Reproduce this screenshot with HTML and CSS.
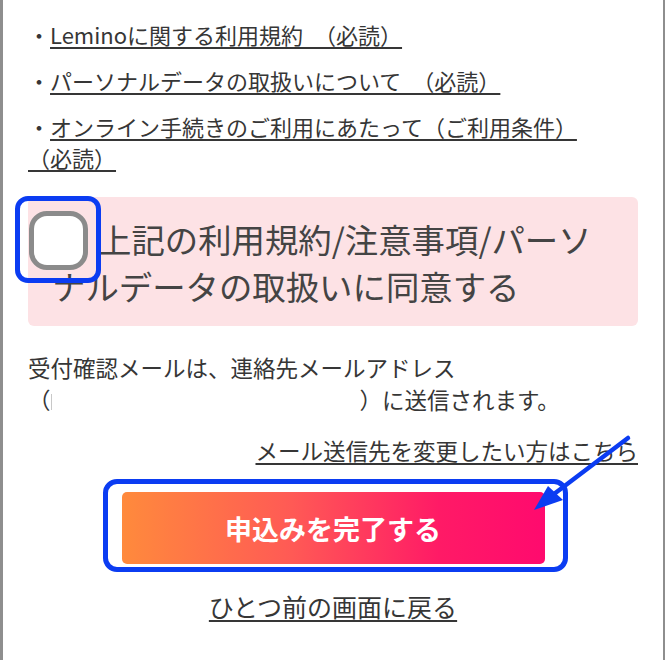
FILE: index.html
```html
<!DOCTYPE html>
<html lang="ja">
<head>
<meta charset="utf-8">
<title>申込み確認</title>
<link rel="stylesheet" href="styles.css">
</head>
<body>
<div class="frame">
  <div class="page">
    <div class="terms">
      <p class="term">・<a href="#" class="link">Leminoに関する利用規約　（必読）</a></p>
      <p class="term">・<a href="#" class="link">パーソナルデータの取扱いについて　（必読）</a></p>
      <p class="term">・<a href="#" class="link">オンライン手続きのご利用にあたって（ご利用条件）<span class="gap"></span><br>（必読）</a></p>
    </div>

    <div class="agree">
      <span class="checkbox"></span>
      <span class="mark mark-check"></span>
      <p class="agree-text">上記の利用規約/注意事項/パーソナルデータの取扱いに同意する</p>
    </div>

    <p class="notice">受付確認メールは、連絡先メールアドレス<br>（<span class="email"></span>）に送信されます。</p>

    <p class="change"><a href="#" class="link">メール送信先を変更したい方はこちら</a></p>

    <div class="submit-wrap">
      <button class="submit" type="button">申込みを完了する</button>
      <span class="mark mark-button"></span>
      <svg class="arrow" width="102" height="80" viewBox="0 0 102 80" aria-hidden="true">
        <line x1="98" y1="4" x2="24" y2="60" stroke="#0b3cf2" stroke-width="4.5" stroke-linecap="round"/>
        <polygon points="4,76 18,52 33,66" fill="#0b3cf2"/>
      </svg>
    </div>

    <p class="back"><a href="#" class="link">ひとつ前の画面に戻る</a></p>
  </div>
</div>
</body>
</html>
```

FILE: styles.css
```css
html, body {
  margin: 0;
  padding: 0;
  background: #ffffff;
}

body {
  width: 666px;
  height: 660px;
  overflow: hidden;
  font-family: "Noto Sans CJK JP", "Noto Sans", sans-serif;
  color: #363636;
}

.frame {
  box-sizing: border-box;
  width: 665px;
  height: 660px;
  border-left: 3px solid #8e8e8e;
  border-right: 2px solid #8e8e8e;
  background: #ffffff;
}

.page {
  padding: 19px 25px 0 25px;
}

.terms {
  display: flex;
  flex-direction: column;
  gap: 15px;
}

.term {
  margin: 0;
  font-size: 22px;
  line-height: 31px;
}

.link {
  color: #363636;
  text-decoration: underline;
  text-decoration-thickness: 1.5px;
  text-underline-offset: 3px;
}

.gap {
  display: inline-block;
  width: 21px;
}

.agree {
  position: relative;
  margin-top: 24px;
  background: #fde2e5;
  border-radius: 6px;
  padding: 18px 40px 17px 24px;
}

.agree-text {
  margin: 0;
  font-size: 33.4px;
  line-height: 47px;
  text-indent: 46px;
  color: #444444;
}

.checkbox {
  position: absolute;
  left: 1px;
  top: 14px;
  width: 49px;
  height: 49px;
  border: 5px solid #8b8b8b;
  border-radius: 18px;
  background: #ffffff;
}

.mark {
  position: absolute;
  border: 5px solid #0b3cf2;
  box-sizing: border-box;
}

.mark-check {
  left: -13px;
  top: -1px;
  width: 86px;
  height: 87px;
  border-radius: 13px;
}

.notice {
  margin: 25px 0 0 0;
  font-size: 22.5px;
  line-height: 32px;
}

.email {
  display: inline-block;
  width: 308px;
  height: 16px;
  border-left: 1px solid #c8c8c8;
  vertical-align: -1px;
}

.change {
  margin: 19px 0 0 0;
  text-align: right;
  font-size: 22.5px;
  line-height: 32px;
}

.submit-wrap {
  position: relative;
  width: 423px;
  margin: 26px auto 0 auto;
}

.submit {
  display: block;
  width: 423px;
  height: 72px;
  border: none;
  border-radius: 5px;
  background: linear-gradient(to right, #ff8a3c 0%, #ff5a55 40%, #ff1a66 75%, #ff0a6e 100%);
  color: #ffffff;
  font-family: "Noto Sans CJK JP", sans-serif;
  font-size: 27px;
  font-weight: 700;
  padding: 0;
}

.mark-button {
  left: -19px;
  top: -13px;
  width: 465px;
  height: 93px;
  border-radius: 14px;
}

.arrow {
  position: absolute;
  left: 408px;
  top: -58px;
}

.back {
  margin: 26px 0 0 0;
  text-align: center;
  font-size: 25px;
  line-height: 32px;
}
```
